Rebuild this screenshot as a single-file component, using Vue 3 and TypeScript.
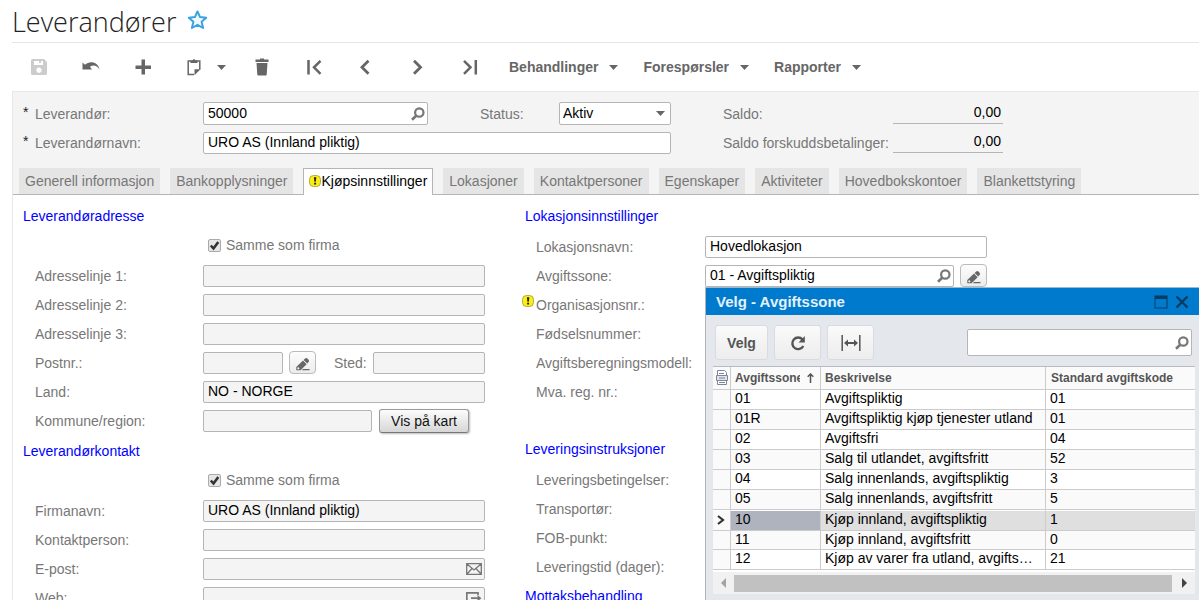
<script setup lang="ts">
import { ref } from 'vue'

interface ToolItem { icon: string; title: string; menu?: boolean; disabled?: boolean }
interface Field { id: string; label: string; value?: string; kind?: 'text' | 'zip' | 'region' | 'lookup' | 'none'; icon?: string; enabled?: boolean; warn?: boolean }
interface Section { title: string; sameAsCompany?: boolean; spaced?: boolean; fields: Field[] }
interface TaxZone { code: string; description: string; category: string }

const tools: ToolItem[] = [
  { icon: 'save', title: 'Lagre', disabled: true },
  { icon: 'undo', title: 'Angre' },
  { icon: 'plus', title: 'Ny' },
  { icon: 'clip', title: 'Kopier', menu: true },
  { icon: 'trash', title: 'Slett' },
  { icon: 'first', title: 'Første' },
  { icon: 'prev', title: 'Forrige' },
  { icon: 'next', title: 'Neste' },
  { icon: 'last', title: 'Siste' },
]
const menus: string[] = ['Behandlinger', 'Forespørsler', 'Rapporter']

const tabs: string[] = [
  'Generell informasjon', 'Bankopplysninger', 'Kjøpsinnstillinger', 'Lokasjoner', 'Kontaktpersoner',
  'Egenskaper', 'Aktiviteter', 'Hovedbokskontoer', 'Blankettstyring',
]
const activeTab = ref('Kjøpsinnstillinger')

const columns: Section[][] = [
  [
    {
      title: 'Leverandøradresse',
      sameAsCompany: true,
      fields: [
        { id: 'addr1', label: 'Adresselinje 1:' },
        { id: 'addr2', label: 'Adresselinje 2:' },
        { id: 'addr3', label: 'Adresselinje 3:' },
        { id: 'zip', label: 'Postnr.:', kind: 'zip' },
        { id: 'country', label: 'Land:', value: 'NO - NORGE' },
        { id: 'region', label: 'Kommune/region:', kind: 'region' },
      ],
    },
    {
      title: 'Leverandørkontakt',
      sameAsCompany: true,
      fields: [
        { id: 'company', label: 'Firmanavn:', value: 'URO AS (Innland pliktig)' },
        { id: 'contact', label: 'Kontaktperson:' },
        { id: 'email', label: 'E-post:', icon: 'mail' },
        { id: 'web', label: 'Web:', icon: 'external' },
      ],
    },
  ],
  [
    {
      title: 'Lokasjonsinnstillinger',
      fields: [
        { id: 'locname', label: 'Lokasjonsnavn:', value: 'Hovedlokasjon', enabled: true },
        { id: 'taxzone', label: 'Avgiftssone:', value: '01 - Avgiftspliktig', kind: 'lookup' },
        { id: 'orgno', label: 'Organisasjonsnr.:', kind: 'none', warn: true },
        { id: 'birthno', label: 'Fødselsnummer:', kind: 'none' },
        { id: 'taxmodel', label: 'Avgiftsberegningsmodell:', kind: 'none' },
        { id: 'vatno', label: 'Mva. reg. nr.:', kind: 'none' },
      ],
    },
    {
      title: 'Leveringsinstruksjoner',
      spaced: true,
      fields: [
        { id: 'terms', label: 'Leveringsbetingelser:', kind: 'none' },
        { id: 'carrier', label: 'Transportør:', kind: 'none' },
        { id: 'fob', label: 'FOB-punkt:', kind: 'none' },
        { id: 'lead', label: 'Leveringstid (dager):', kind: 'none' },
      ],
    },
    { title: 'Mottaksbehandling', fields: [] },
  ],
]

const zones: TaxZone[] = [
  { code: '01', description: 'Avgiftspliktig', category: '01' },
  { code: '01R', description: 'Avgiftspliktig kjøp tjenester utland', category: '01' },
  { code: '02', description: 'Avgiftsfri', category: '04' },
  { code: '03', description: 'Salg til utlandet, avgiftsfritt', category: '52' },
  { code: '04', description: 'Salg innenlands, avgiftspliktig', category: '3' },
  { code: '05', description: 'Salg innenlands, avgiftsfritt', category: '5' },
  { code: '10', description: 'Kjøp innland, avgiftspliktig', category: '1' },
  { code: '11', description: 'Kjøp innland, avgiftsfritt', category: '0' },
  { code: '12', description: 'Kjøp av varer fra utland, avgiftsfritt', category: '21' },
]
const selected = ref('10')
</script>

<template>
  <div class="page">
    <svg class="defs" aria-hidden="true">
      <symbol id="save" viewBox="0 0 18 18"><path fill="currentColor" fill-rule="evenodd" d="M1 2.5Q1 1 2.5 1H14l3 3v11.500Q17 17 15.500 17H2.500Q1 17 1 15.500ZM4 3v4h9V3h-2v2H9V3ZM9 9.500a2.700 2.700 0 1 0 .01 0Z" /></symbol>
      <symbol id="undo" viewBox="0 0 18 18"><path fill="currentColor" d="M.5 4.500L3 6.800C7 2.500 16 3 17.500 11.500c-2.500-4.500-6.500-5-9.500-2.800L10 11.500H.500Z" /></symbol>
      <symbol id="plus" viewBox="0 0 18 18"><path fill="currentColor" d="M7.500 1.500h3.500V7.500h6V11h-6v5.500H7.500V11h-6V7.500h6Z" /></symbol>
      <symbol id="clip" viewBox="0 0 18 18"><path fill="none" stroke="currentColor" stroke-width="1.500" d="M9 16.500H3.200V3h11.600v8.500" /><path fill="currentColor" d="M5.500 5V2.500H7.500Q9 -.5 10.500 2.500h2V5ZM9.500 17.200v-6h6Z" /></symbol>
      <symbol id="trash" viewBox="0 0 18 18"><path fill="currentColor" d="M2.500 1.500H7V.5h4v1h4.500V4h-13ZM3.500 5h11l-.8 11.500q-.1 1-1 1H5.300q-.9 0-1-1Z" /></symbol>
      <symbol id="first" viewBox="0 0 18 18"><path fill="none" stroke="currentColor" stroke-width="2.500" d="M3.500 2v14.500M15.500 2.800L9 9.300l6.500 6.500" /></symbol>
      <symbol id="prev" viewBox="0 0 18 18"><path fill="none" stroke="currentColor" stroke-width="2.800" d="M11.500 2.800L5 9.300l6.500 6.500" /></symbol>
      <symbol id="next" viewBox="0 0 18 18"><path fill="none" stroke="currentColor" stroke-width="2.800" d="M5 2.800l6.500 6.500L5 15.800" /></symbol>
      <symbol id="last" viewBox="0 0 18 18"><path fill="none" stroke="currentColor" stroke-width="2.500" d="M14.800 2v14.500M3 2.800l6.500 6.500L3 15.800" /></symbol>
      <symbol id="caret" viewBox="0 0 9 5"><path fill="currentColor" d="M0 0h9L4.500 5Z" /></symbol>
      <symbol id="search" viewBox="0 0 14 14"><circle cx="8.300" cy="5.500" r="4.200" fill="none" stroke="currentColor" stroke-width="2.200" /><path fill="none" stroke="currentColor" stroke-width="2.600" d="M5.200 8.700L1 12.700" /></symbol>
      <symbol id="pencil" viewBox="0 0 14 14"><path fill="currentColor" fill-rule="evenodd" d="M.3 13.300V10L7 3.600l3.700 3.600L4.500 13.300ZM2.300 10.200a1.100 1.100 0 1 0 .01 0ZM7.600 3l1.500-1.500q1.200-1 2.300 0l1.200 1.200q1 1.100 0 2.300L11.300 6.600ZM7 12h6.500v1.300H5.800Z" /></symbol>
      <symbol id="warn" viewBox="0 0 12 12"><rect x=".5" y=".5" width="11" height="11" rx="4" fill="#fcee10" stroke="#b3ab48" /><path fill="#222" d="M4.900 2.200h2.400l-.5 4.600H5.400ZM5.100 7.700h2v1.900h-2Z" /></symbol>
      <symbol id="mail" viewBox="0 0 16 12"><path fill="none" stroke="currentColor" stroke-width="1.300" d="M.7.700h14.600v10.600H.700ZM1 1l7 6 7-6M1 11l5-5.500M15 11l-5-5.500" /></symbol>
      <symbol id="external" viewBox="0 0 16 12"><path fill="none" stroke="currentColor" stroke-width="1.700" d="M12 3V.8H.8v10.400H12V9.500M5 6.200h8" /><path fill="currentColor" d="M11.500 3l4 3.200-4 3.200Z" /></symbol>
      <symbol id="refresh" viewBox="0 0 16 16"><path fill="none" stroke="currentColor" stroke-width="2.400" d="M12.500 4.500A5.800 5.800 0 1 0 13.300 11" /><path fill="currentColor" d="M14.800 1v6.500H8.500Z" /></symbol>
      <symbol id="fit" viewBox="0 0 20 18"><path fill="none" stroke="currentColor" stroke-width="1.500" d="M1.200 1v16M18.800 1v16" /><path fill="currentColor" d="M3 9l4-3.500V8h6V5.500L17 9l-4 3.500V10H7v2.500Z" /></symbol>
      <symbol id="files" viewBox="0 0 12 16"><path fill="#fff" stroke="currentColor" d="M1.500 14.500V.5h7l2 2v12Z" /><path fill="#dfe3ea" stroke="currentColor" d="M.5 5.500h11v5H.500Z" /><path stroke="currentColor" d="M3 3.500h5M3 8h6M3 12.500h6" /></symbol>
    </svg>

    <header class="title">
      <h1>Leverandører</h1>
      <button class="bare star" type="button" aria-label="Favoritt">
        <svg viewBox="0 0 20 20"><path fill="#f1f9fe" stroke="#3aa3df" stroke-width="2" stroke-linejoin="round" d="M10 1.500l2.600 5.600 6.100.6-4.600 4 1.500 6.300L10 14.800 4.400 18l1.500-6.300-4.600-4 6.100-.6Z" /></svg>
      </button>
    </header>

    <nav class="toolbar" aria-label="Verktøylinje">
      <button v-for="t in tools" :key="t.icon" class="bare tool" :class="{ split: t.menu }" type="button" :disabled="t.disabled" :aria-label="t.title">
        <svg class="icon"><use :href="'#' + t.icon" /></svg>
        <svg v-if="t.menu" class="caret"><use href="#caret" /></svg>
      </button>
      <button v-for="m in menus" :key="m" class="bare menu" type="button">{{ m }}<svg class="caret"><use href="#caret" /></svg></button>
    </nav>

    <section class="summary">
      <div class="row">
        <label class="lbl" for="vendor"><span class="mark">*</span>Leverandør:</label>
        <div class="box vendor"><input id="vendor" value="50000"><svg class="search"><use href="#search" /></svg></div>
        <label class="status-label" for="status">Status:</label>
        <div class="box status"><select id="status"><option>Aktiv</option></select><svg class="caret"><use href="#caret" /></svg></div>
        <label class="saldo" for="saldo">Saldo:</label>
        <output id="saldo">0,00</output>
      </div>
      <div class="row">
        <label class="lbl" for="vendorname"><span class="mark">*</span>Leverandørnavn:</label>
        <div class="box vendorname"><input id="vendorname" value="URO AS (Innland pliktig)"></div>
        <label class="saldo" for="prepaid">Saldo forskuddsbetalinger:</label>
        <output id="prepaid">0,00</output>
      </div>
      <div class="tabs" role="tablist">
        <button v-for="t in tabs" :key="t" class="tab" :class="{ active: t === activeTab }" type="button" role="tab" :aria-selected="t === activeTab" @click="activeTab = t">
          <svg v-if="t === 'Kjøpsinnstillinger'" class="warn"><use href="#warn" /></svg>{{ t }}
        </button>
      </div>
    </section>

    <main class="content">
      <div v-for="(col, c) in columns" :key="c" class="column">
        <section v-for="s in col" :key="s.title" class="section" :class="{ spaced: s.spaced }">
          <h2>{{ s.title }}</h2>
          <div v-if="s.sameAsCompany" class="same">
            <label><span class="check"><input type="checkbox" checked><svg viewBox="0 0 13 13"><path fill="none" stroke="#333" stroke-width="2.600" d="M2.800 6.500l2.700 3 4.800-6.500" /></svg></span>Samme som firma</label>
          </div>
          <div v-for="f in s.fields" :key="f.id" class="row">
            <component :is="f.kind === 'none' ? 'span' : 'label'" class="lbl" :for="f.kind === 'none' ? undefined : f.id">
              <span class="mark"><svg v-if="f.warn" class="warn"><use href="#warn" /></svg></span>{{ f.label }}
            </component>
            <template v-if="f.kind === 'zip'">
              <div class="box off zip"><input :id="f.id" readonly></div>
              <button class="edit" type="button" aria-label="Rediger postnr."><svg><use href="#pencil" /></svg></button>
              <label class="city-label" for="city">Sted:</label>
              <div class="box off city"><input id="city" readonly></div>
            </template>
            <template v-else-if="f.kind === 'region'">
              <div class="box off region"><input :id="f.id" readonly></div>
              <button class="map" type="button">Vis på kart</button>
            </template>
            <template v-else-if="f.kind === 'lookup'">
              <div class="box lookup"><input :id="f.id" :value="f.value"><svg class="search"><use href="#search" /></svg></div>
              <button class="edit" type="button" aria-label="Rediger avgiftssone"><svg><use href="#pencil" /></svg></button>
            </template>
            <div v-else-if="f.kind !== 'none'" class="box wide" :class="{ off: !f.enabled }">
              <input :id="f.id" :value="f.value" :readonly="!f.enabled"><svg v-if="f.icon" class="action"><use :href="'#' + f.icon" /></svg>
            </div>
          </div>
        </section>
      </div>
    </main>

    <div class="dialog" role="dialog" aria-labelledby="dialog-title">
      <div class="dialog-head">
        <h2 id="dialog-title">Velg - Avgiftssone</h2>
        <button class="bare" type="button" aria-label="Maksimer"><svg viewBox="0 0 14 14"><path fill="currentColor" fill-rule="evenodd" d="M.5.500h13v13H.500ZM1.500 4v8.500h11V4Z" /></svg></button>
        <button class="bare" type="button" aria-label="Lukk"><svg viewBox="0 0 14 14"><path fill="none" stroke="currentColor" stroke-width="2.400" d="M1.500 1.500l11 11M12.500 1.500l-11 11" /></svg></button>
      </div>
      <div class="dialog-tools">
        <button class="push velg" type="button">Velg</button>
        <button class="push" type="button" aria-label="Oppdater"><svg class="refresh"><use href="#refresh" /></svg></button>
        <button class="push" type="button" aria-label="Tilpass kolonner"><svg class="fit"><use href="#fit" /></svg></button>
        <div class="box find"><input type="text" aria-label="Søk"><svg class="search"><use href="#search" /></svg></div>
      </div>
      <div class="grid">
        <table>
          <colgroup><col class="c-mark"><col class="c-code"><col class="c-desc"><col></colgroup>
          <thead>
            <tr>
              <th class="files"><svg><use href="#files" /></svg></th>
              <th><div class="sorted"><span>Avgiftssone</span><svg viewBox="0 0 7 10"><path fill="none" stroke="currentColor" stroke-width="1.500" d="M3.500 10V1M.7 3.800L3.500 1l2.800 2.800" /></svg></div></th>
              <th>Beskrivelse</th>
              <th>Standard avgiftskode</th>
            </tr>
          </thead>
          <tbody>
            <tr v-for="z in zones" :key="z.code" :class="{ selected: z.code === selected }" @click="selected = z.code">
              <td class="pointer"><svg v-if="z.code === selected" viewBox="0 0 8 10"><path fill="none" stroke="#333" stroke-width="2.200" d="M1 1l5 4-5 4" /></svg></td>
              <td>{{ z.code }}</td>
              <td class="desc">{{ z.description }}</td>
              <td>{{ z.category }}</td>
            </tr>
          </tbody>
        </table>
        <div class="scroll">
          <svg class="dim" viewBox="0 0 5 10"><path fill="currentColor" d="M5 0v10L0 5Z" /></svg>
          <div class="thumb"></div>
          <svg viewBox="0 0 5 10"><path fill="currentColor" d="M0 0v10l5-5Z" /></svg>
        </div>
      </div>
    </div>
  </div>
</template>

<style>
body {
  background: #fff;
}
</style>

<style scoped>
.page {
  position: relative;
  height: 100vh;
  overflow: hidden;
  box-sizing: border-box;
  padding-left: 12px;
  display: flex;
  flex-direction: column;
  font-family: "Liberation Sans", Arial, sans-serif;
  font-size: 14px;
  color: #777;
  background: #fff;
}
.page *, .page *::before { box-sizing: border-box; }
.defs { position: absolute; width: 0; height: 0; }
svg { display: block; flex: none; }
button, input, select { font: inherit; color: inherit; margin: 0; padding: 0; }
h1, h2 { margin: 0; font-weight: 400; }
.bare { border: 0; background: none; display: flex; align-items: center; }

.title { flex: none; display: flex; height: 43px; border-bottom: 1px solid #e5e5e5; }
.title h1 { font: 300 27px/43px "Open Sans", sans-serif; color: #222; }
.star { margin-left: 11px; height: 40px; }
.star svg { width: 21px; height: 20px; }

.toolbar { flex: none; display: flex; height: 48px; padding-left: 1px; color: #666; }
.tool { width: 52px; justify-content: center; }
.tool:disabled { color: #ccc; }
.tool.split { width: 67px; gap: 14px; padding-left: 5px; }
.icon { width: 18px; height: 18px; }
.caret { width: 9px; height: 5px; }
.menu { padding: 0 12px 0 13px; gap: 11px; font-weight: 700; white-space: nowrap; }

.summary { flex: none; background: #f4f4f4; border-top: 1px solid #e8e8e8; border-left: 1px solid #e8e8e8; padding-top: 7px; }
.row { display: flex; align-items: center; height: 29px; white-space: nowrap; }
.summary .row { padding-left: 8px; }
.lbl { flex: none; width: 182px; display: flex; align-items: center; line-height: 20px; padding-top: 1px; }
.mark { width: 14px; height: 20px; padding-left: 2px; flex: none; color: #222; line-height: 16px; }
.warn { width: 12px; height: 12px; }
.mark .warn { margin-left: -3px; }
.box {
  flex: none;
  display: flex;
  align-items: center;
  height: 22px;
  border: 1px solid #b5b5b5;
  border-radius: 2px;
  background: #fff;
  color: #000;
}
.box.off { background: #f4f4f4; }
.box input, .box select { flex: 1; min-width: 0; height: 100%; border: 0; outline: 0; background: none; padding: 0 4px 2px; appearance: none; }
.search { width: 14px; height: 14px; margin-right: 2px; color: #777; }
.vendor { width: 225px; }
.vendor, .status { height: 23px; }
.status { width: 112px; }
.status .caret { margin: 0 5px; color: #666; }
.box.status select { padding-left: 3px; }
.status-label { width: 131px; padding-left: 52px; }
.vendorname { width: 468px; }
.saldo { width: 222px; padding-left: 52px; }
output { width: 110px; height: 21px; line-height: 19px; text-align: right; padding-right: 2px; color: #000; border-bottom: 1px solid #b5b5b5; }

.tabs { display: flex; gap: 10px; margin-top: 11px; padding: 0 6px; height: 27px; border-bottom: 1px solid #b5b5b5; }
.tab { display: flex; align-items: center; height: 26px; padding: 0 6px; border: 0; background: #e5e5e5; white-space: nowrap; }
.tab.active { height: 27px; border: 1px solid #b5b5b5; border-bottom: 0; padding: 0 5px 2px; background: #fff; color: #000; }

.content { flex: 1; min-height: 0; display: flex; padding: 6px 0 0 8px; border-left: 1px solid #e8e8e8; }
.column { flex: none; width: 502px; }
.section h2 { height: 30px; padding-left: 2px; font-size: 14px; line-height: 30px; color: #00f; }
.section.spaced { margin-top: 28px; }
.column:last-child .section .row:first-of-type { margin-top: 1px; }
.column:last-child .mark { width: 13px; }
.column:first-child .section { padding-bottom: 1px; }
.same { height: 30px; padding: 0 0 2px 187px; display: flex; align-items: center; }
.same label { display: flex; align-items: center; gap: 5px; }
.check { position: relative; width: 13px; height: 13px; }
.check input { display: block; width: 13px; height: 13px; appearance: none; border: 1px solid #aaa; border-radius: 2px; background: #e6e6e6; }
.check svg { position: absolute; inset: 0; width: 13px; height: 13px; pointer-events: none; }
.wide { width: 282px; }
.action { width: 16px; height: 12px; margin-right: 2px; color: #777; }
.zip { width: 80px; }
.city-label { margin-left: 18px; width: 39px; }
.city { width: 112px; }
.region { width: 169px; }
.lookup { width: 249px; }
.edit { width: 27px; height: 23px; margin-left: 6px; border: 1px solid #bbb; border-radius: 4px; background: linear-gradient(#fdfdfd, #ececec); color: #666; display: flex; align-items: center; justify-content: center; padding-top: 2px; }
.edit svg { width: 14px; height: 14px; }
.map { width: 90px; height: 24px; margin-left: 7px; border: 1px solid #999; border-bottom-color: #777; border-radius: 3px; background: linear-gradient(#fcfcfc, #d6d6d6); color: #111; box-shadow: 1px 1px 2px #bbb; }

.dialog { position: absolute; top: 287px; left: 705px; right: 0; min-height: 330px; background: #e4e8ed; border-left: 1px solid #b0b4b8; border-top: 1px solid #9bbbd2; }
.dialog-head { display: flex; align-items: center; gap: 7px; height: 27px; padding: 0 10px; background: #007acc; color: #053c63; }
.dialog-head h2 { flex: 1; font-size: 15px; font-weight: 700; line-height: 25px; color: #e3f1fb; }
.dialog-head svg { width: 14px; height: 14px; }
.dialog-tools { display: flex; align-items: center; gap: 6px; height: 51px; padding: 4px 7px 0 9px; }
.push { height: 35px; width: 47px; border: 1px solid #d9dbde; border-radius: 3px; background: linear-gradient(#fafafa, #ededed); color: #555; font-weight: 700; display: flex; align-items: center; justify-content: center; }
.push.velg { width: 53px; }
.refresh { width: 16px; height: 16px; }
.fit { width: 20px; height: 18px; }
.find { width: 225px; height: 27px; margin-left: auto; }

.grid { margin: 0 4px 0 7px; border-top: 1px solid #b8bcc0; background: #fff; }
table { width: 100%; table-layout: fixed; border-collapse: separate; border-spacing: 0; color: #000; }
.c-mark { width: 18px; }
.c-code { width: 90px; }
.c-desc { width: 225px; }
th, td { padding: 0 4px; text-align: left; overflow: hidden; text-overflow: ellipsis; white-space: nowrap; border-right: 1px solid #ccc; border-bottom: 1px solid #ccc; }
th:last-child, td:last-child { border-right: 0; }
th { height: 23px; font-size: 12px; line-height: 20px; color: #555; background: #fafafa; }
th:last-child { padding-left: 5px; }
th:nth-child(2) { padding: 0 6px 0 4px; }
td { height: 20px; line-height: 17px; padding-bottom: 2px; }
td.desc { padding-right: 11px; }
tbody tr:nth-child(even) { background: #fafafa; }
th.files { padding: 0 2px 0 3px; color: #7d879b; }
.files svg { width: 12px; height: 16px; }
.sorted { display: flex; align-items: center; gap: 7px; }
.sorted span { flex: 1; overflow: hidden; }
.sorted svg { width: 7px; height: 10px; }
.pointer { background: #fafafa; }
.pointer svg { width: 8px; height: 10px; }
tbody tr.selected { background: #dfdfdf; }
tr.selected td { height: 21px; border-top: 1px solid #fff; }
tr.selected td:nth-child(2) { background: #afb3be; }
tr.selected + tr td { height: 19px; padding-bottom: 1px; }
.scroll { display: flex; align-items: center; gap: 8px; height: 24px; padding: 1px 8px; background: #f1f1f1; color: #444; border-top: 2px solid #fff; }
.scroll svg { width: 5px; height: 10px; }
.scroll .dim { color: #a3a3a3; }
.thumb { flex: 1; height: 17px; margin-right: 2px; background: #c1c1c1; }
</style>
